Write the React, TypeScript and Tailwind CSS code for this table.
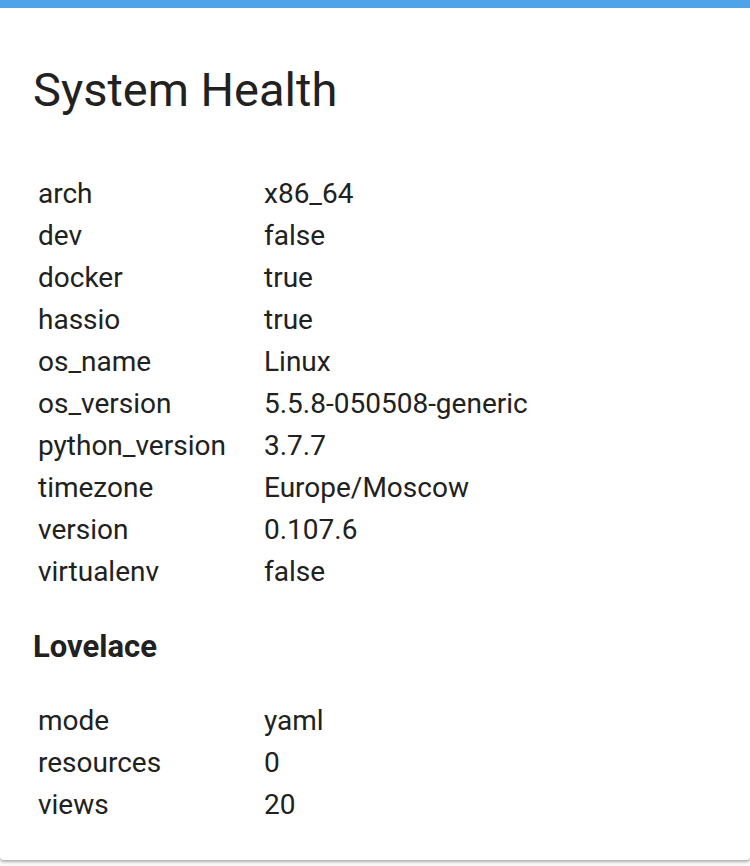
import React from 'react';

const systemInfo: [string, string][] = [
  ['arch', 'x86_64'],
  ['dev', 'false'],
  ['docker', 'true'],
  ['hassio', 'true'],
  ['os_name', 'Linux'],
  ['os_version', '5.5.8-050508-generic'],
  ['python_version', '3.7.7'],
  ['timezone', 'Europe/Moscow'],
  ['version', '0.107.6'],
  ['virtualenv', 'false'],
];

const lovelaceInfo: [string, string][] = [
  ['mode', 'yaml'],
  ['resources', '0'],
  ['views', '20'],
];

const InfoTable: React.FC<{ rows: [string, string][] }> = ({ rows }) => (
  <table className="ml-[5px]">
    <tbody>
      {rows.map(([key, value]) => (
        <tr key={key} className="h-[42px]">
          <td className="w-[226px] p-0 align-middle">{key}</td>
          <td className="p-0 align-middle">{value}</td>
        </tr>
      ))}
    </tbody>
  </table>
);

const App: React.FC = () => {
  return (
    <div className="min-h-[866px] bg-[#fafafa] font-['Roboto',sans-serif] text-[#212121]">
      <div className="h-[8px] bg-[#4fa3e8]" />
      <div className="rounded-b-[4px] bg-white px-[33px] pb-[34px] pt-[54px] shadow-[0_2px_3px_rgba(0,0,0,0.3)]">
        <h1 className="text-[47px] font-normal leading-[56px]">System Health</h1>

        <div className="mt-[55px] text-[28px]">
          <InfoTable rows={systemInfo} />
        </div>

        {/* Lovelace */}
        <h2 className="mt-[34px] text-[31px] font-bold leading-[40px]">Lovelace</h2>
        <div className="mt-[33px] text-[28px]">
          <InfoTable rows={lovelaceInfo} />
        </div>
      </div>
    </div>
  );
};

export default App;
